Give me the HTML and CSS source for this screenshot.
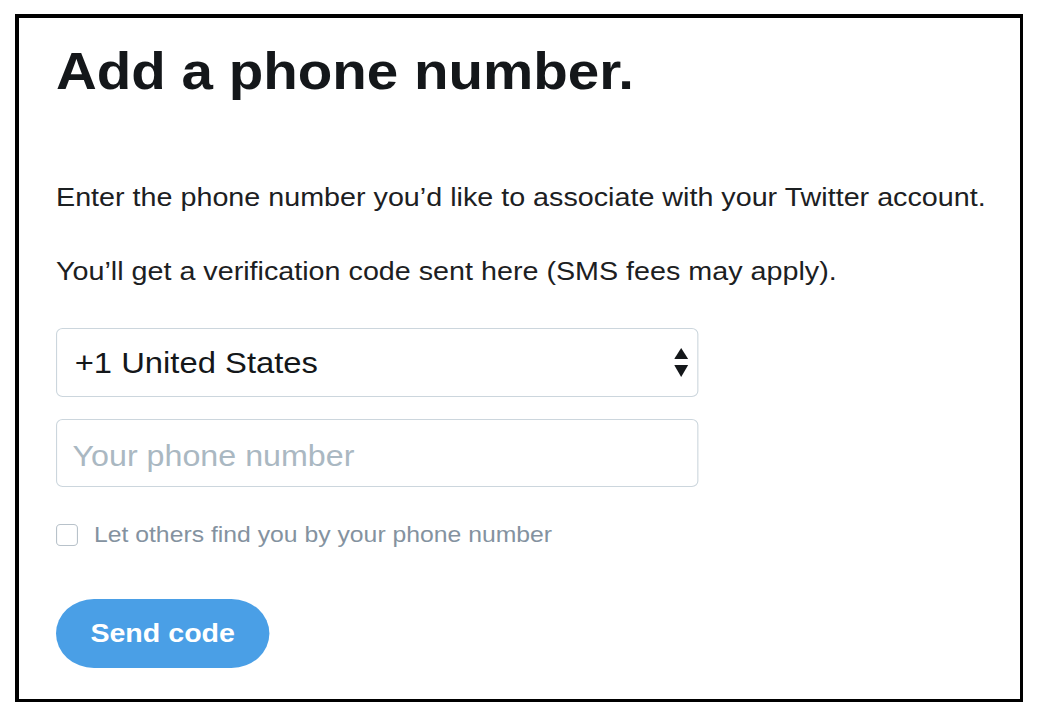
FILE: index.html
```html
<!DOCTYPE html>
<html lang="en">
<head>
<meta charset="utf-8">
<title>Add a phone number</title>
<link rel="stylesheet" href="styles.css">
</head>
<body>
<div class="frame">
  <div class="content">
    <h1 class="title">Add a phone number.</h1>
    <p class="text first">Enter the phone number you’d like to associate with your Twitter account.</p>
    <p class="text second">You’ll get a verification code sent here (SMS fees may apply).</p>
    <div class="select-wrap">
      <select class="country">
        <option>+1 United States</option>
      </select>
      <svg class="arrows" viewBox="0 0 12 29" width="12.7" height="29" preserveAspectRatio="none" aria-hidden="true">
        <path d="M0 11 L6 0 L12 11 Z" fill="#14171a"/>
        <path d="M0 17 L12 17 L6 29 Z" fill="#14171a"/>
      </svg>
    </div>
    <input class="phone" type="tel" placeholder="Your phone number">
    <label class="check-row">
      <span class="box"></span>
      <span class="check-label">Let others find you by your phone number</span>
    </label>
    <button class="send" type="button">Send code</button>
  </div>
</div>
</body>
</html>
```

FILE: styles.css
```css
html, body {
  margin: 0;
  padding: 0;
  background: #ffffff;
}

body {
  font-family: "Liberation Sans", Arial, Helvetica, sans-serif;
}

.frame {
  box-sizing: border-box;
  margin: 14px 0 0 15px;
  width: 1008px;
  height: 688px;
  border-style: solid;
  border-color: #000000;
  border-width: 4px 3px 3px 4px;
  padding: 28px 0 0 37px;
  overflow: hidden;
}

.content {
  width: 876px;
  display: flex;
  flex-direction: column;
  align-items: flex-start;
  transform: scaleX(1.1);
  transform-origin: 0 0;
}

.title {
  margin: 0;
  font-size: 51.4px;
  line-height: 51px;
  font-weight: 700;
  color: #14171a;
}

.text {
  margin: 0;
  font-size: 26.1px;
  line-height: 30px;
  color: #1c2022;
  white-space: nowrap;
}

.text.first {
  margin-top: 85px;
}

.text.second {
  margin-top: 44px;
}

.select-wrap {
  position: relative;
  margin-top: 42px;
  width: 584px;
  height: 69px;
}

.country {
  -webkit-appearance: none;
  appearance: none;
  box-sizing: border-box;
  width: 100%;
  height: 100%;
  border: 1px solid #ccd6dd;
  border-radius: 6px;
  background: #ffffff;
  padding: 0 0 0 16px;
  font-family: "Liberation Sans", Arial, sans-serif;
  font-size: 29.8px;
  color: #14171a;
  outline: none;
}

.arrows {
  position: absolute;
  left: 562px;
  top: 20px;
}

.phone {
  box-sizing: border-box;
  margin-top: 22px;
  width: 584px;
  height: 68px;
  border: 1px solid #ccd6dd;
  border-radius: 6px;
  padding: 6px 0 0 14px;
  font-family: "Liberation Sans", Arial, sans-serif;
  font-size: 29.3px;
  color: #14171a;
  background: #ffffff;
  outline: none;
}

.phone::placeholder {
  color: #aab8c2;
}

.check-row {
  margin-top: 37px;
  display: flex;
  align-items: center;
  gap: 14.5px;
  height: 22px;
}

.box {
  box-sizing: border-box;
  width: 20px;
  height: 22px;
  border: 1.5px solid #b8c2ca;
  border-radius: 4px;
  background: #ffffff;
}

.check-label {
  font-size: 22.5px;
  line-height: 22px;
  color: #8492a0;
  white-space: nowrap;
}

.send {
  margin-top: 53px;
  width: 194px;
  height: 69px;
  border: none;
  border-radius: 35px;
  background: #4a9fe6;
  color: #ffffff;
  font-family: "Liberation Sans", Arial, sans-serif;
  font-size: 26px;
  font-weight: 700;
  padding: 0;
  cursor: pointer;
}
```
